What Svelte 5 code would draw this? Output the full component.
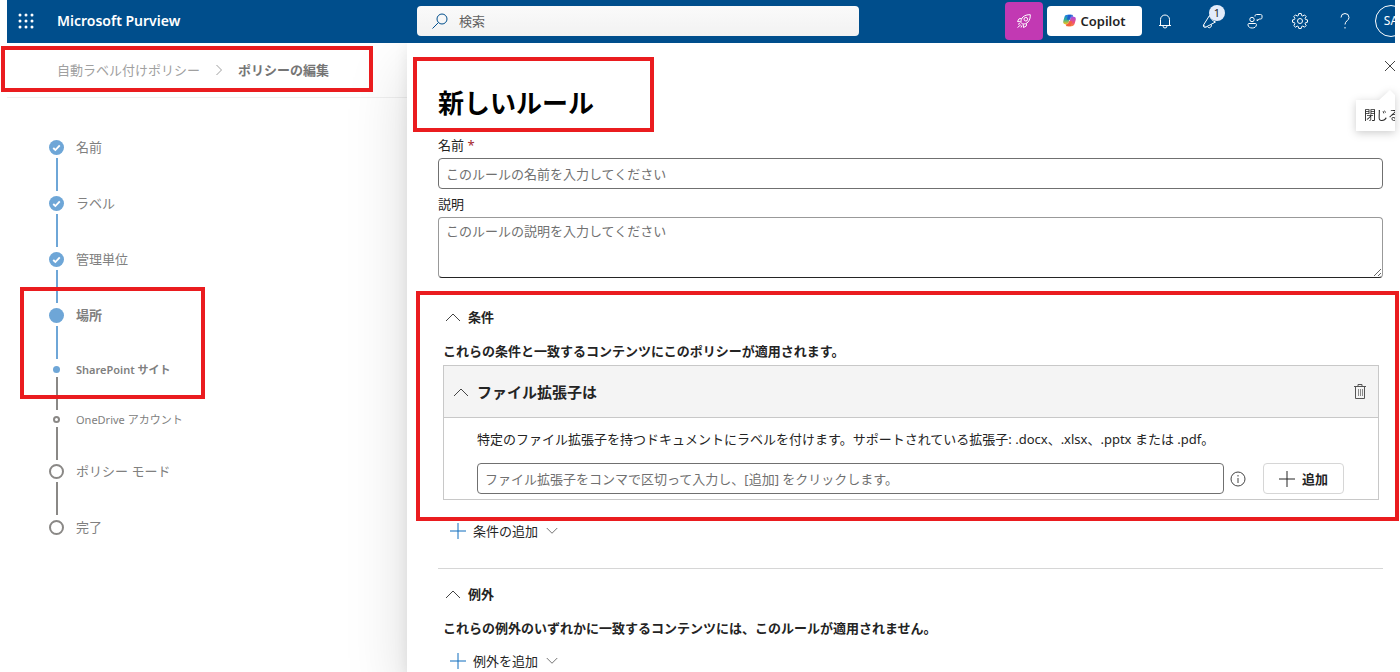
<script lang="ts">
	type Step = { label: string; state: 'done' | 'current' | 'todo'; sub?: boolean };

	const steps: Step[] = [
		{ label: '名前', state: 'done' },
		{ label: 'ラベル', state: 'done' },
		{ label: '管理単位', state: 'done' },
		{ label: '場所', state: 'current' },
		{ label: 'SharePoint サイト', state: 'current', sub: true },
		{ label: 'OneDrive アカウント', state: 'todo', sub: true },
		{ label: 'ポリシー モード', state: 'todo' },
		{ label: '完了', state: 'todo' }
	];

	let name = $state('');
	let description = $state('');
	let extensions = $state('');
	let openConditions = $state(true);
	let openExtensions = $state(true);
	let openExceptions = $state(true);
</script>

{#snippet chevron(up: boolean)}
	<svg class="chevron" class:down={!up} viewBox="0 0 16 16" aria-hidden="true">
		<path d="M1 12 8 5l7 7" />
	</svg>
{/snippet}

{#snippet plus()}
	<svg class="plus" viewBox="0 0 16 16" aria-hidden="true">
		<path d="M8 0v16M0 8h16" />
	</svg>
{/snippet}

<div class="page">
	<header class="topbar">
		<button class="waffle" aria-label="アプリ起動ツール">
			<svg viewBox="0 0 16 16">
				{#each [2, 8, 14] as y}
					{#each [2, 8, 14] as x}
						<circle cx={x} cy={y} r="1.5" />
					{/each}
				{/each}
			</svg>
		</button>
		<a class="brand" href="#home">Microsoft Purview</a>
		<label class="search">
			<svg viewBox="0 0 16 16" aria-hidden="true">
				<circle cx="10" cy="6" r="5" />
				<path d="M6.400 9.600.5 15.500" />
			</svg>
			<input type="search" placeholder="検索" aria-label="検索" />
		</label>
		<div class="tools">
			<button class="rocket" aria-label="新機能">
				<svg viewBox="0 0 16 16">
					<path d="M5 9.500C4.500 5 8 1.500 14.300 1.700 14.500 8 11 11.500 6.500 11z" />
					<circle cx="9.800" cy="6.200" r="1.800" />
					<path d="M5.500 5.500 3 5.800 1.500 8.500l3.200.3M10.500 10.500l-.2 2.500-2.800 1.500-.3-3.200M4 10.500l-2 .8M4.800 11.800 1.500 14.500M5.800 12.500 5 14.500" />
				</svg>
			</button>
			<button class="copilot">
				<svg viewBox="0 0 16 16" aria-hidden="true">
					<defs>
						<linearGradient id="cool" x1="0" y1="0" x2="0" y2="1">
							<stop offset="0" stop-color="#1b7be8" />
							<stop offset="0.5" stop-color="#2fae9b" />
							<stop offset="1" stop-color="#f5c518" />
						</linearGradient>
						<linearGradient id="warm" x1="0" y1="0" x2="0" y2="1">
							<stop offset="0" stop-color="#a64be0" />
							<stop offset="0.6" stop-color="#ef4f7b" />
							<stop offset="1" stop-color="#f78a3b" />
						</linearGradient>
					</defs>
					<path fill="url(#cool)" d="M5.500 1H10L6.800 10.500C6.400 12 5.600 12.500 4.500 12.500H3C.8 12.500-.2 11 .4 8.500L1.700 4C2.300 2 3.500 1 5.500 1z" />
					<path fill="url(#warm)" d="M10.500 15H6L9.200 5.500C9.600 4 10.400 3.500 11.500 3.500H13c2.200 0 3.200 1.500 2.600 4L14.300 12c-.6 2-1.800 3-3.800 3z" />
					<path fill="#1f55d0" d="M6.500 1h4.300c1 0 1.500.8 1.900 2.500h-1.200c-1.100 0-1.900.5-2.300 2L8.700 7H4.500z" opacity=".85" />
					<path fill="#f2643c" d="M9.500 15H5.200c-1 0-1.500-.8-1.900-2.500h1.200c1.100 0 1.900-.5 2.300-2L7.300 9h4.200z" />
				</svg>
				Copilot
			</button>
			<button class="tool" aria-label="通知">
				<svg viewBox="0 0 16 16">
					<path d="M3.500 12V6.500a4.500 4.500 0 0 1 9 0V12M2 12.500h12M6 13a2 2 0 0 0 4 0" />
				</svg>
			</button>
			<button class="tool" aria-label="お知らせ">
				<svg viewBox="0 0 16 16">
					<path d="M7.500 2.500 1.500 12c-.6 1.500.6 2.800 2 2.300L13.500 9M1.500 12l2.200 2.300M5.500 13.500c1 2.200 4.200 1.500 4-2M7.500 2.500c1 3 3 5.500 6 6.500" />
				</svg>
				<span class="count">1</span>
			</button>
			<button class="tool" aria-label="フィードバック">
				<svg viewBox="0 0 16 16">
					<circle cx="5" cy="6.500" r="2.200" />
					<path d="M2 10.500h6.500c.8 0 1 .6.900 1.500-.3 2-1.900 3-4.200 3S1.300 14 1 12c-.1-1 .2-1.500 1-1.500zM8 3.500C8 2 8.500 1.500 9.500 1.500h4c1 0 1.500.5 1.500 1.500v1.500c0 1-.5 1.500-1.500 1.500h-1.300l-2 2V6.200" />
				</svg>
			</button>
			<button class="tool" aria-label="設定">
				<svg viewBox="0 0 16 16">
					<path d="m6.800.5-.4 2-1.200.5-1.700-1.100-1.700 1.700 1.100 1.700-.5 1.200-1.900.4v2.300l1.900.4.5 1.200-1.100 1.700 1.700 1.700 1.700-1.100 1.200.5.4 1.900h2.400l.4-1.900 1.200-.5 1.700 1.100 1.700-1.700-1.100-1.700.5-1.200 1.900-.4V6.900l-1.900-.4-.5-1.200 1.100-1.700-1.700-1.700L10.800 3l-1.200-.5-.4-2z" />
					<circle cx="8" cy="8" r="2.500" />
				</svg>
			</button>
			<button class="tool" aria-label="ヘルプ">
				<svg viewBox="0 0 16 16">
					<path d="M4 4.500a4 4 0 0 1 8 0c0 3-4 3.500-4 7M8 14v1.500" />
				</svg>
			</button>
			<button class="avatar">SA</button>
		</div>
	</header>

	<div class="body">
		<aside class="wizard">
			<nav class="crumbs" aria-label="階層">
				<a href="#policies">自動ラベル付けポリシー</a>
				<svg viewBox="0 0 8 12" aria-hidden="true"><path d="m1.500 1 5 5-5 5" /></svg>
				<b>ポリシーの編集</b>
				<span class="mark mark-crumbs"></span>
			</nav>
			<ol class="steps">
				{#each steps as step}
					<li class="{step.state} {step.sub ? 'sub' : ''}">
						<span class="dot">
							{#if step.state == 'done'}
								<svg viewBox="0 0 16 16" aria-hidden="true"><path d="m4.500 8.500 2.300 2.200 4.700-5" /></svg>
							{/if}
						</span>
						<span class="label">{step.label}</span>
					</li>
				{/each}
			</ol>
			<span class="mark mark-steps"></span>
		</aside>

		<main class="panel">
			<button class="close" aria-label="閉じる" aria-describedby="close-tip">
				<svg viewBox="0 0 12 12"><path d="m1 1 10 10M11 1 1 11" /></svg>
			</button>
			<div class="tip" id="close-tip" role="tooltip"><span>閉じる</span></div>

			<h1>新しいルール<span class="mark mark-title"></span></h1>

			<label class="caption" for="rule-name">名前 <span class="required">*</span></label>
			<input id="rule-name" class="field" type="text" placeholder="このルールの名前を入力してください" bind:value={name} />
			<label class="caption" for="rule-description">説明</label>
			<textarea id="rule-description" class="field" placeholder="このルールの説明を入力してください" bind:value={description}></textarea>

			<section class="group">
				<span class="mark mark-conditions"></span>
				<button class="toggle" aria-expanded={openConditions} onclick={() => (openConditions = !openConditions)}>
					{@render chevron(openConditions)}条件
				</button>
				{#if openConditions}
					<p class="lead">これらの条件と一致するコンテンツにこのポリシーが適用されます。</p>
					<div class="card">
						<div class="card-head">
							<button class="toggle" aria-expanded={openExtensions} onclick={() => (openExtensions = !openExtensions)}>
								{@render chevron(openExtensions)}ファイル拡張子は
							</button>
							<button class="trash" aria-label="削除">
								<svg viewBox="0 0 14 16">
									<path d="M1 2.500h12M5 2.500v-2h4v2M2.500 2.500v12h9v-12" />
									<path class="ribs" d="M5.500 5v7M7.500 5v7M9.500 5v7" />
								</svg>
							</button>
						</div>
						{#if openExtensions}
							<div class="card-body">
								<label for="extensions">特定のファイル拡張子を持つドキュメントにラベルを付けます。サポートされている拡張子: .docx、.xlsx、.pptx または .pdf。</label>
								<div class="entry">
									<input id="extensions" class="field" type="text" placeholder="ファイル拡張子をコンマで区切って入力し、[追加] をクリックします。" bind:value={extensions} />
									<button class="info" aria-label="情報">
										<svg viewBox="0 0 16 16">
											<circle cx="8" cy="8" r="7" />
											<path d="M8 7v5M8 4v1.500" />
										</svg>
									</button>
									<button class="add">{@render plus()}追加</button>
								</div>
							</div>
						{/if}
					</div>
				{/if}
				<button class="more">{@render plus()}条件の追加{@render chevron(false)}</button>
			</section>

			<hr />

			<section class="group">
				<button class="toggle" aria-expanded={openExceptions} onclick={() => (openExceptions = !openExceptions)}>
					{@render chevron(openExceptions)}例外
				</button>
				{#if openExceptions}
					<p class="lead">これらの例外のいずれかに一致するコンテンツには、このルールが適用されません。</p>
				{/if}
				<button class="more">{@render plus()}例外を追加{@render chevron(false)}</button>
			</section>
		</main>
	</div>
</div>

<style>
	:global(body) {
		background: #fff;
	}

	.page {
		height: 100vh;
		overflow: hidden;
		display: flex;
		flex-direction: column;
		font: 13px/20px 'Noto Sans', 'Noto Sans CJK JP', sans-serif;
		color: #242424;
	}

	.page * {
		box-sizing: border-box;
	}

	button {
		display: flex;
		align-items: center;
		border: 0;
		padding: 0;
		background: none;
		font: inherit;
		color: inherit;
		cursor: pointer;
	}

	svg {
		display: block;
		flex: none;
		width: 16px;
		height: 16px;
		fill: none;
		stroke: currentColor;
	}

	a {
		color: inherit;
		text-decoration: none;
	}

	.mark {
		position: absolute;
		z-index: 3;
		border: 4px solid #ea1c1f;
		pointer-events: none;
	}

	.topbar {
		flex: none;
		display: flex;
		align-items: center;
		height: 43px;
		margin: 0 5px 0 7px;
		padding: 0 0 2px 11px;
		background: #004e8c;
		color: #fff;
		overflow: hidden;
	}

	.waffle svg {
		fill: #fff;
		stroke: none;
	}

	.brand {
		flex: none;
		width: 383px;
		padding-left: 23px;
		font-size: 14px;
		font-weight: 600;
	}

	.search {
		flex: 0 1 442px;
		display: flex;
		align-items: center;
		gap: 11px;
		height: 30px;
		padding: 0 15px;
		border-radius: 4px;
		background: linear-gradient(#fafafa, #f2f2f2);
		color: #004e8c;

		input {
			flex: 1;
			min-width: 0;
			border: 0;
			padding: 0;
			background: none;
			font: inherit;
			outline: 0;
		}

		input::placeholder {
			color: #616161;
		}
	}

	.tools {
		flex: none;
		display: flex;
		align-items: center;
		margin-left: auto;
		margin-right: -12px;
	}

	.rocket {
		justify-content: center;
		width: 38px;
		height: 38px;
		margin-right: 4px;
		border-radius: 4px;
		background: #c239b3;
	}

	.copilot {
		justify-content: center;
		gap: 4px;
		width: 95px;
		height: 30px;
		border-radius: 4px;
		background: #fff;
		color: #242424;
		font-weight: 600;

		svg {
			width: 13px;
			height: 13px;
			stroke: none;
		}
	}

	.tool {
		position: relative;
		justify-content: center;
		width: 45px;
		height: 40px;
	}

	.count {
		position: absolute;
		top: 4px;
		right: 7px;
		width: 16px;
		height: 16px;
		border-radius: 8px;
		background: #e3ecfa;
		color: #242424;
		font-size: 11px;
		line-height: 16px;
	}

	.avatar {
		justify-content: center;
		width: 32px;
		height: 32px;
		margin-left: 8px;
		border: 1px solid #fff;
		border-radius: 50%;
		font-size: 12px;
	}

	.body {
		flex: 1;
		display: flex;
		min-height: 0;
		margin-left: 7px;
	}

	.wizard {
		flex: none;
		position: relative;
		width: 400px;
		color: #808080;
	}

	.crumbs {
		position: relative;
		display: flex;
		align-items: center;
		gap: 15px;
		height: 55px;
		padding-left: 50px;
		border-bottom: 1px solid #f0f0f0;
		color: #a0a0a0;

		svg {
			width: 8px;
			height: 12px;
		}

		b {
			color: #757575;
		}
	}

	.mark-crumbs {
		top: 3px;
		left: -6px;
		width: 372px;
		height: 46px;
	}

	.steps {
		margin: 0;
		padding: 39px 0 0 42px;
		list-style: none;
		--line: #8a8886;
	}

	.steps li {
		position: relative;
		display: flex;
		align-items: center;
		gap: 12px;
		height: 20px;
		margin-bottom: 36px;
	}

	.steps li:not(:last-child)::after {
		content: '';
		position: absolute;
		top: 21px;
		left: 7px;
		width: 2px;
		height: 33px;
		background: var(--line);
	}

	.steps .done,
	.steps .current:not(.sub) {
		--line: #6ea6d7;
	}

	.dot {
		flex: none;
		width: 15px;
		height: 15px;
		border: 2px solid #8a8886;
		border-radius: 50%;
	}

	.done .dot,
	.current .dot {
		border: 0;
		background: #6ea6d7;
		color: #fff;
	}

	.dot svg {
		width: 15px;
		height: 15px;
		stroke-width: 2;
	}

	.current .label {
		font-weight: 600;
	}

	.steps .sub {
		gap: 16px;
		height: 17px;
		margin-bottom: 33px;
		padding-left: 4px;
		font-size: 11px;

		.dot {
			width: 7px;
			height: 7px;
		}
	}

	.steps .sub:not(:last-child)::after {
		top: 16px;
	}

	.mark-steps {
		top: 244px;
		left: 13px;
		width: 185px;
		height: 112px;
	}

	.panel {
		position: relative;
		flex: 1;
		min-width: 0;
		padding: 43px 17px 0 31px;
		background: #fff;
		box-shadow:
			0 26px 58px #00000026,
			0 5px 14px #00000014;
		clip-path: inset(0 0 0 -120px);
	}

	.close {
		position: absolute;
		top: 17px;
		right: 4px;
		color: #444;

		svg {
			width: 12px;
			height: 12px;
		}
	}

	.tip {
		position: absolute;
		top: 57px;
		right: 5px;
		width: 39px;
		height: 31px;
		padding-left: 8px;
		background: #fff;
		filter: drop-shadow(0 2px 4px #0003);
		font-size: 12px;
		line-height: 31px;

		span {
			display: block;
			overflow: hidden;
			white-space: nowrap;
		}
	}

	.tip::before {
		content: '';
		position: absolute;
		top: -10px;
		right: 0;
		width: 16px;
		height: 10px;
		background: #fff;
		clip-path: polygon(0 100%, 11px 0, 100% 5px, 100% 100%);
	}

	h1 {
		position: relative;
		margin: 0 0 15px;
		font-size: 26px;
		line-height: 34px;
		color: #000;
	}

	.mark-title {
		top: -29px;
		left: -25px;
		width: 241px;
		height: 75px;
	}

	.caption {
		display: block;
		height: 23px;
	}

	.required {
		color: #a4262c;
	}

	.field {
		display: block;
		width: 100%;
		height: 31px;
		margin: 0 0 5px;
		padding: 4px 7px;
		border: 1px solid #707070;
		border-radius: 4px;
		background: #fff;
		font: inherit;
	}

	.field::placeholder {
		color: #707070;
	}

	textarea.field {
		height: 61px;
		margin-bottom: 29px;
		padding-top: 3px;
		border-color: #999 #999 #242424;
	}

	.group {
		position: relative;
		padding: 0 4px 0 5px;
	}

	.mark-conditions {
		top: -16px;
		right: -16px;
		bottom: 20px;
		left: -22px;
	}

	.toggle {
		gap: 7px;
		padding-left: 2px;
		font-weight: 600;
	}

	.chevron {
		color: #444;
	}

	.chevron.down {
		width: 12px;
		height: 12px;
		transform: rotate(180deg);
	}

	.lead {
		margin: 14px 0 4px;
		font-weight: 600;
	}

	.card {
		margin-bottom: 21px;
		border: 1px solid #c8c8c8;
	}

	.card-head {
		display: flex;
		align-items: center;
		justify-content: space-between;
		height: 52px;
		padding: 0 11px 0 7px;
		border-bottom: 1px solid #c8c8c8;
		background: #f4f4f4;

		.toggle {
			gap: 8px;
			font-size: 15px;
		}
	}

	.trash {
		color: #555;

		svg {
			width: 14px;
		}

		.ribs {
			stroke: #8a8a8a;
		}
	}

	.card-body {
		padding: 11px 34px 5px 33px;

		label {
			display: block;
			margin-bottom: 14px;
		}
	}

	.entry {
		display: flex;
		align-items: center;

		.field {
			flex: 1;
			min-width: 0;
			margin: 0;
		}
	}

	.info {
		margin: 0 17px 0 6px;
		color: #444;
	}

	.add {
		justify-content: center;
		gap: 7px;
		width: 81px;
		height: 31px;
		border: 1px solid #d6d6d6;
		border-radius: 4px;
		font-weight: 600;
	}

	.more {
		gap: 7px;
		height: 20px;
		padding-left: 7px;

		.plus {
			color: #0f6cbd;
		}

		.chevron {
			margin-left: 1px;
		}
	}

	.lead + .more {
		margin-top: 13px;
	}

	hr {
		margin: 27px 0 15px;
		border: 0;
		border-top: 1px solid #d6d6d6;
	}
</style>
